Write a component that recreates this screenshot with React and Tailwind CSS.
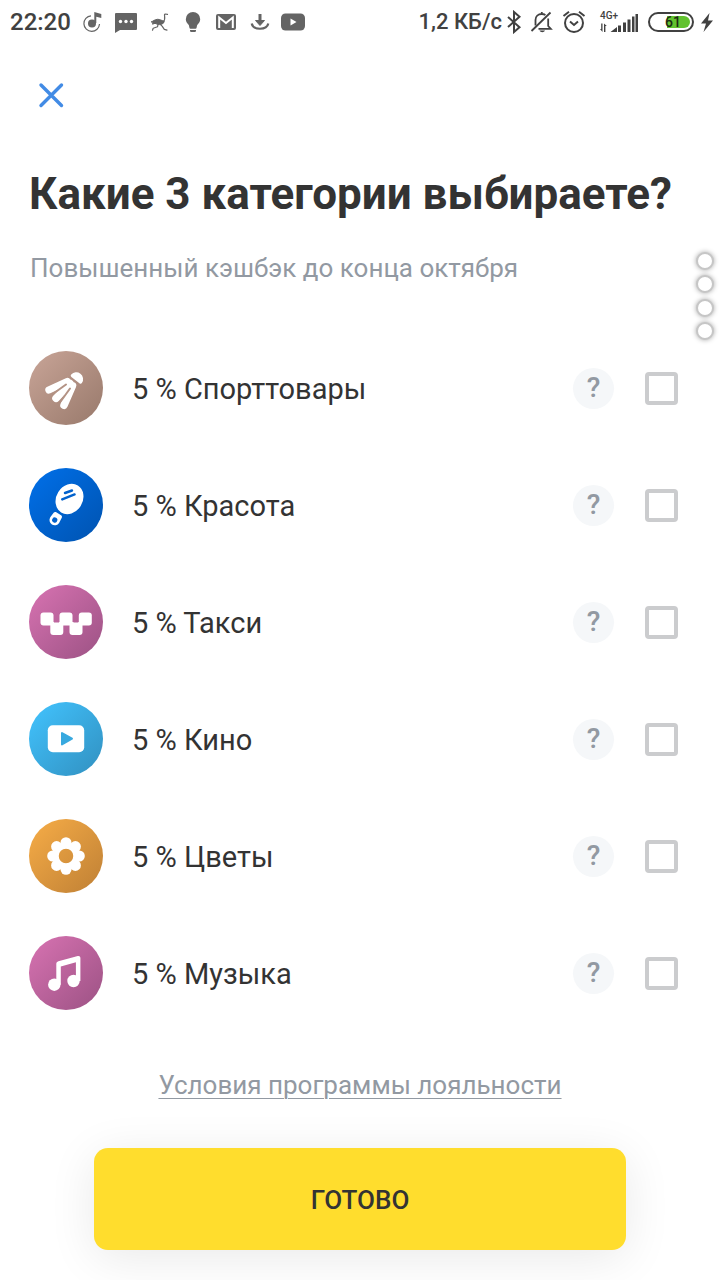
import { useState } from 'react'

const categories = [
  { id: 'sport', name: 'Спорттовары', bg: 'bg-linear-to-br from-[#c9a598] to-[#98796b]', Icon: ShuttlecockIcon },
  { id: 'beauty', name: 'Красота', bg: 'bg-linear-to-br from-[#0070ea] to-[#0053b0]', Icon: MirrorIcon },
  { id: 'taxi', name: 'Такси', bg: 'bg-linear-to-br from-[#d873b2] to-[#9c5284]', Icon: TaxiIcon },
  { id: 'cinema', name: 'Кино', bg: 'bg-linear-to-br from-[#42c4ff] to-[#3190c0]', Icon: CinemaIcon },
  { id: 'flowers', name: 'Цветы', bg: 'bg-linear-to-br from-[#f7ad47] to-[#bf8035]', Icon: FlowerIcon },
  { id: 'music', name: 'Музыка', bg: 'bg-linear-to-br from-[#d873b2] to-[#9c5284]', Icon: MusicIcon },
]

function ShuttlecockIcon() {
  return (
    <svg viewBox="0 0 74 74" className="h-full w-full" aria-hidden="true">
      <path d="M42.200 23.600a6.800 6.800 0 0 1 10.800 8.200c-.7 1.100-1.700 1.200-2.600.4l-8-6.200c-.9-.7-.9-1.500-.2-2.400z" fill="#fff" />
      <g stroke="#fff" strokeLinecap="round">
        <path d="M19.800 39 38.300 30.500" strokeWidth="7" />
        <path d="M27 47.300 41 32.500M35 54.300 43.500 34.800" strokeWidth="7.500" />
      </g>
      <path d="m24.500 42.500 12.500-9M32 50l9-12.500" stroke="#b39284" strokeWidth="2" strokeLinecap="round" />
    </svg>
  )
}

function MirrorIcon() {
  return (
    <svg viewBox="0 0 74 74" className="h-full w-full" aria-hidden="true">
      <ellipse cx="40.500" cy="31" rx="13.200" ry="15.800" transform="rotate(32 40.500 31)" fill="#fff" />
      <path d="m36 25 7-2.500M33.200 31.400l12.400-5" stroke="#0262cd" strokeWidth="2.400" strokeLinecap="round" />
      <g transform="rotate(32 27 50)">
        <path
          d="M24.200 45h5.600c1.200 0 1.900.7 2 1.800l.4 5.700a5.200 5.200 0 0 1-10.400 0l.4-5.700c.1-1.100.8-1.800 2-1.800z"
          fill="#fff"
        />
        <circle cx="27" cy="52.400" r="2.600" fill="#0262cd" />
      </g>
    </svg>
  )
}

function TaxiIcon() {
  return (
    <svg viewBox="0 0 74 74" className="h-full w-full" fill="#fff" aria-hidden="true">
      <rect x="11.500" y="27.500" width="13" height="13" rx="3" />
      <rect x="30.500" y="27.500" width="13" height="13" rx="3" />
      <rect x="49.800" y="27.500" width="13" height="13" rx="3" />
      <rect x="21.300" y="37.500" width="13" height="12.500" rx="3" />
      <rect x="40.500" y="37.500" width="13" height="12.500" rx="3" />
      <path d="M20 37h5v3h-5zM30 37h5v3h-5zM39.500 37h5v3h-5zM49.300 37h5v3h-5z" />
    </svg>
  )
}

function CinemaIcon() {
  return (
    <svg viewBox="0 0 74 74" className="h-full w-full" aria-hidden="true">
      <rect x="18.800" y="23.200" width="36.400" height="27" rx="5" fill="#fff" />
      <path d="M33 31v11.400l10-5.700z" fill="#38a9df" stroke="#38a9df" strokeWidth="2" strokeLinejoin="round" />
    </svg>
  )
}

function FlowerIcon() {
  const petals = [0, 45, 90, 135, 180, 225, 270, 315]
  return (
    <svg viewBox="0 0 74 74" className="h-full w-full" aria-hidden="true">
      {petals.map((angle) => (
        <circle key={angle} cx="37" cy="23.700" r="5.500" fill="#fff" transform={`rotate(${angle} 37 37)`} />
      ))}
      <circle cx="37" cy="37" r="10.500" fill="none" stroke="#fff" strokeWidth="6.500" />
    </svg>
  )
}

function MusicIcon() {
  return (
    <svg viewBox="0 0 74 74" className="h-full w-full" fill="#fff" aria-hidden="true">
      <circle cx="25.300" cy="48.700" r="6.200" />
      <circle cx="44.500" cy="45" r="6.200" />
      <path d="M27.300 28c0-1.400.8-2.300 2.100-2.700l19.400-5.200c1.500-.4 2.600.5 2.600 2V45h-4.500V26.300l-15.100 4.100v18.300h-4.500z" />
    </svg>
  )
}

function NotificationIcons() {
  return (
    <div className="ml-[10px] flex w-[224px] justify-between text-[#646464]" aria-hidden="true">
      <svg viewBox="0 0 24 24" className="size-6">
        <circle cx="11" cy="13.500" r="4" fill="currentColor" />
        <path d="M10 5.800A7.800 7.800 0 1 0 18.500 14" fill="none" stroke="currentColor" strokeWidth="1.200" />
        <path d="M13.300 13V2l7 2v4l-5-1.300V13z" fill="currentColor" />
      </svg>
      <svg viewBox="0 0 24 24" className="size-6" fill="currentColor">
        <path d="M2 3h20a1 1 0 0 1 1 1v15a1 1 0 0 1-1 1H6l-5 3V4a1 1 0 0 1 1-1z" />
        <g fill="#fff">
          <circle cx="6.500" cy="11.500" r="1.700" />
          <circle cx="12" cy="11.500" r="1.700" />
          <circle cx="17.500" cy="11.500" r="1.700" />
        </g>
      </svg>
      <svg viewBox="0 0 24 24" className="size-6" fill="none" stroke="currentColor" strokeLinecap="round" strokeLinejoin="round">
        <path d="M19.500 4.300 17.200 4c-.8 0-.8.800-.6 1.800.3 2 .4 4.500-1.600 7" strokeWidth="1.200" />
        <path
          d="M3.500 11.800c2-.6 3-2.300 6-2.500 2.500-.1 4 1.400 6.500 1.700.3 1.900-1.700 3.600-4.500 3.600-2 0-3-.8-4.500-1.300l-2.500.9.500-1.600z"
          fill="currentColor"
          strokeWidth="1"
        />
        <path d="m10 14.500-.5 2.300-4.300 1.400-.7 2M12.500 14.500l1.800 1.800 2 3 2.700.8" strokeWidth="1.200" />
      </svg>
      <svg viewBox="0 0 24 24" className="size-6" fill="currentColor">
        <path d="M12 2a7.200 7.200 0 0 1 7.200 7.200c0 2.700-1.500 4.300-3 5.700l-.7 3.100a1 1 0 0 1-1 .8h-5a1 1 0 0 1-1-.8l-.7-3.100c-1.500-1.400-3-3-3-5.700A7.200 7.200 0 0 1 12 2zM9 20h6v.8a1.200 1.200 0 0 1-1.200 1.200h-3.600A1.200 1.200 0 0 1 9 20.800z" />
      </svg>
      <svg viewBox="0 0 24 24" className="size-6" fill="currentColor">
        <rect x="2" y="4" width="20" height="16" rx="2" />
        <path d="M5.200 18V7.500L12 13l6.800-5.500V18" fill="none" stroke="#fff" strokeWidth="2" />
      </svg>
      <svg viewBox="0 0 24 24" className="size-6" fill="none" stroke="currentColor">
        <path d="M12 4v8" strokeWidth="3" />
        <path d="m7.500 10.500 4.500 5 4.500-5z" fill="currentColor" />
        <path d="M3.700 13.500c1.500 7 15.100 7 16.600 0" strokeWidth="2.200" />
      </svg>
      <svg viewBox="0 0 24 24" className="size-6" fill="currentColor">
        <rect x="0" y="3.500" width="24" height="17" rx="4.500" />
        <path d="m9.500 8.500 6 3.500-6 3.500z" fill="#fff" />
      </svg>
    </div>
  )
}

function SystemIcons() {
  return (
    <div className="flex items-center text-[#414141]" aria-hidden="true">
      <svg viewBox="0 0 16 24" className="ml-[4px] h-6 w-4" fill="none" stroke="currentColor" strokeWidth="2">
        <path d="m2 7 11.500 10.200L8 22V2l5.500 4.800L2 17" />
      </svg>
      <svg viewBox="0 0 24 24" className="ml-[8px] size-6" fill="none" stroke="currentColor" strokeWidth="1.800">
        <path d="M5.500 15.500V10c0-3.500 2.600-6 6.300-6 1.500 0 2.700.4 3.600 1.200M18.200 8.500V16l2.600 2.800H8.500M11.800 4V2" />
        <path d="M1.500 21 20.500 2.500" />
        <path d="M9.500 20.500h5.500c-1 2.300-4.500 2.300-5.500 0z" fill="currentColor" stroke="none" />
      </svg>
      <svg viewBox="0 0 24 24" className="ml-[8px] size-6" fill="none" stroke="currentColor" strokeWidth="2">
        <circle cx="12" cy="13" r="9" />
        <path d="m8 11.500 4 3.500 4-3.500M1.500 6 7 1.800M22.500 6 17 1.800" />
      </svg>
      <div className="ml-[14px] flex w-[38px] flex-col">
        <span className="text-[10px] font-medium leading-[8px]">4G+</span>
        <svg viewBox="0 0 38 20" className="-mt-[7px] h-5 w-[38px]" fill="currentColor">
          <path d="M0 16h1.200v-5.500h1.300V19zM4 19v-8.500L6.800 13H5.400v6zM10.500 19l6.500-5v5zM18 19v-6.500h3V19zM23 19V9.500h3V19zM27.500 19V6.500h3V19zM32 19V3.500h2.500V19zM35.500 19V1H38v18z" />
        </svg>
      </div>
      <div className="ml-[10px] flex h-5 w-[46px] rounded-full border-2 border-current p-[2px]">
        <div className="ml-[15px] flex flex-1 items-center rounded-r-full bg-[#62c22f]">
          <span className="-ml-[2px] text-[14px] font-medium leading-none text-[#1c2b14]">61</span>
        </div>
      </div>
      <svg viewBox="0 0 14 24" className="ml-[6px] h-6 w-[14px]" fill="currentColor">
        <path d="M9.500 3 1 13.500h5L3.500 22 13 10.500H8z" />
      </svg>
    </div>
  )
}

function StatusBar() {
  return (
    <div className="flex h-11 items-center justify-between pl-[10px] pr-[6px]">
      <div className="flex items-center">
        <span className="text-[24px] font-medium leading-7 text-[#414141]">22:20</span>
        <NotificationIcons />
      </div>
      <div className="flex items-center">
        <span className="whitespace-nowrap text-[22px] font-medium leading-7 text-[#414141]">1,2 КБ/с</span>
        <SystemIcons />
      </div>
    </div>
  )
}

function CategoryRow({ category, checked, onToggle }) {
  const { id, name, bg, Icon } = category
  return (
    <li className="flex items-center">
      <div className={`size-[74px] shrink-0 overflow-hidden rounded-full ${bg}`}>
        <Icon />
      </div>
      <label htmlFor={id} className="ml-[29px] flex-1 pt-[2px] text-[29px] leading-9 text-[#333]">
        5 % {name}
      </label>
      <button
        type="button"
        aria-label={`Подробнее: ${name}`}
        className="mr-[31px] size-[41px] shrink-0 rounded-full bg-[#f5f7f9] text-[28px] font-medium leading-10 text-[#9299a2]"
      >
        ?
      </button>
      <input
        id={id}
        type="checkbox"
        checked={checked}
        onChange={() => onToggle(id)}
        className="size-[33px] shrink-0 appearance-none rounded-[4px] border-4 border-[#cbccce] bg-white checked:border-[#428bf9] checked:bg-[#428bf9]"
      />
    </li>
  )
}

export default function App() {
  const [selected, setSelected] = useState([])

  const toggle = (id) => {
    setSelected((prev) => {
      if (prev.includes(id)) return prev.filter((item) => item !== id)
      return prev.length < 3 ? [...prev, id] : prev
    })
  }

  return (
    <div className="relative min-h-screen overflow-hidden bg-white font-['Roboto',sans-serif]">
      <StatusBar />

      <main>
        <button type="button" aria-label="Закрыть" className="ml-[38px] mt-[38px] block text-[#428be5]">
          <svg viewBox="0 0 26 26" className="size-[26px]" fill="none" stroke="currentColor" strokeWidth="3.400" strokeLinecap="round">
            <path d="m3 3 20.500 20.500M23.500 3 3 23.500" />
          </svg>
        </button>

        <h1 className="mt-[60px] pl-[29px] text-[44px] font-bold leading-[52px] text-[#333]">
          Какие 3 категории выбираете?
        </h1>
        <p className="mt-8 pl-[30px] text-[26px] leading-8 text-[#9299a2]">Повышенный кэшбэк до конца октября</p>

        <ul className="mt-[67px] flex flex-col gap-[43px] pl-[29px] pr-[42px]">
          {categories.map((category) => (
            <CategoryRow
              key={category.id}
              category={category}
              checked={selected.includes(category.id)}
              onToggle={toggle}
            />
          ))}
        </ul>

        <p className="mt-[59px] text-center text-[26px] leading-8 text-[#9299a2]">
          <a href="#terms" className="underline decoration-1 underline-offset-4">Условия программы лояльности</a>
        </p>

        <div className="px-[94px] pb-[30px] pt-[47px]">
          <button
            type="button"
            className="h-[102px] w-full rounded-[14px] bg-[#ffdd2d] pt-[2px] text-[26px] font-medium text-[#333] shadow-[0_8px_48px_rgba(0,0,0,0.09)]"
          >
            ГОТОВО
          </button>
        </div>
      </main>

      <div className="absolute right-[6px] top-[252px] flex h-[88px] flex-col justify-between" aria-hidden="true">
        {[0, 1, 2, 3].map((dot) => (
          <span key={dot} className="size-[18px] rounded-full border-2 border-[#c6c6c6] bg-white shadow-[0_0_5px_rgba(0,0,0,0.35)]" />
        ))}
      </div>
    </div>
  )
}
